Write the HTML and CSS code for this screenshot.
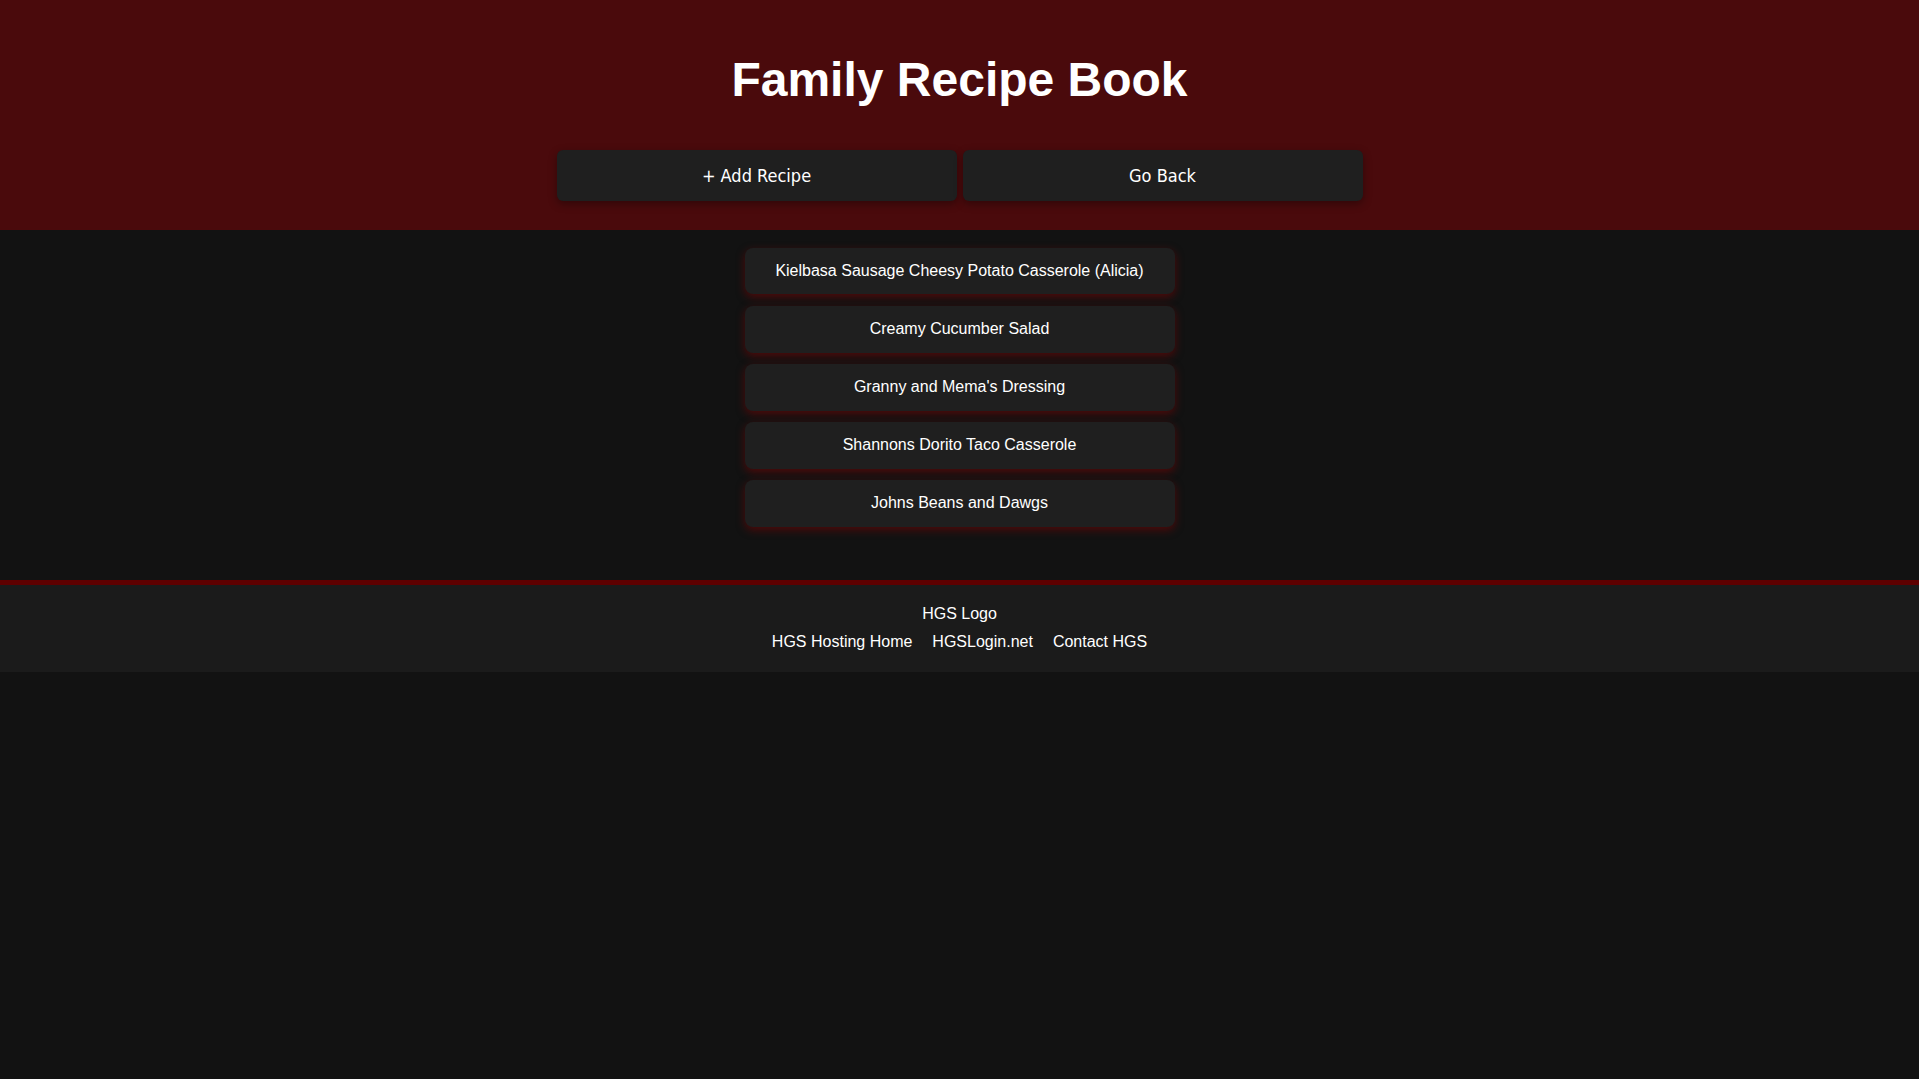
FILE: index.html
```html
<!DOCTYPE html>
<html lang="en">
<head>
<meta charset="utf-8">
<title>Family Recipe Book</title>
<link rel="stylesheet" href="styles.css">
</head>
<body>
<header class="site-header">
  <h1 class="title">Family Recipe Book</h1>
  <div class="actions">
    <button class="action-btn">+ Add Recipe</button>
    <button class="action-btn">Go Back</button>
  </div>
</header>
<main class="recipes">
  <div class="recipe">Kielbasa Sausage Cheesy Potato Casserole (Alicia)</div>
  <div class="recipe">Creamy Cucumber Salad</div>
  <div class="recipe">Granny and Mema's Dressing</div>
  <div class="recipe">Shannons Dorito Taco Casserole</div>
  <div class="recipe">Johns Beans and Dawgs</div>
</main>
<footer class="site-footer">
  <div class="logo">HGS Logo</div>
  <nav class="links">
    <a href="#">HGS Hosting Home</a>
    <a href="#">HGSLogin.net</a>
    <a href="#">Contact HGS</a>
  </nav>
</footer>
</body>
</html>
```
FILE: styles.css
```css
html, body {
  margin: 0;
  padding: 0;
  background: #121212;
  color: #ffffff;
  font-family: "Liberation Sans", Arial, sans-serif;
}

.site-header {
  background: #4a0a0c;
  padding: 20px 0 20px;
  text-align: center;
}

.title {
  margin: 32px 0 0;
  font-size: 48px;
  font-weight: bold;
  line-height: 55px;
  color: #ffffff;
}

.actions {
  display: flex;
  justify-content: center;
  gap: 6px;
  margin-top: 43px;
  margin-bottom: 9px;
}

.action-btn {
  width: 400px;
  height: 51px;
  background: #1f1f1f;
  color: #ffffff;
  border: none;
  border-radius: 6px;
  font-family: "DejaVu Sans Condensed", "DejaVu Sans", Tahoma, sans-serif;
  font-stretch: condensed;
  font-size: 18px;
  box-shadow: 0 3px 8px rgba(0, 0, 0, 0.35);
  cursor: pointer;
}

.recipes {
  display: flex;
  flex-direction: column;
  align-items: center;
  gap: 11.7px;
  padding: 18px 0 53px;
}

.recipe {
  width: 430px;
  box-sizing: border-box;
  padding: 14px 10px;
  background: #1f1f1f;
  border-radius: 8px;
  text-align: center;
  font-size: 16px;
  line-height: 18.4px;
  box-shadow: 0 3px 9px rgba(139, 0, 0, 0.5);
}

.site-footer {
  background: #1b1b1b;
  border-top: 5px solid #5e0000;
  padding: 20px 0;
  text-align: center;
  font-size: 16px;
  line-height: 18.4px;
}

.logo {
  margin-bottom: 10px;
}

.links {
  display: flex;
  justify-content: center;
  gap: 20px;
}

.links a {
  color: #ffffff;
  text-decoration: none;
}
```
